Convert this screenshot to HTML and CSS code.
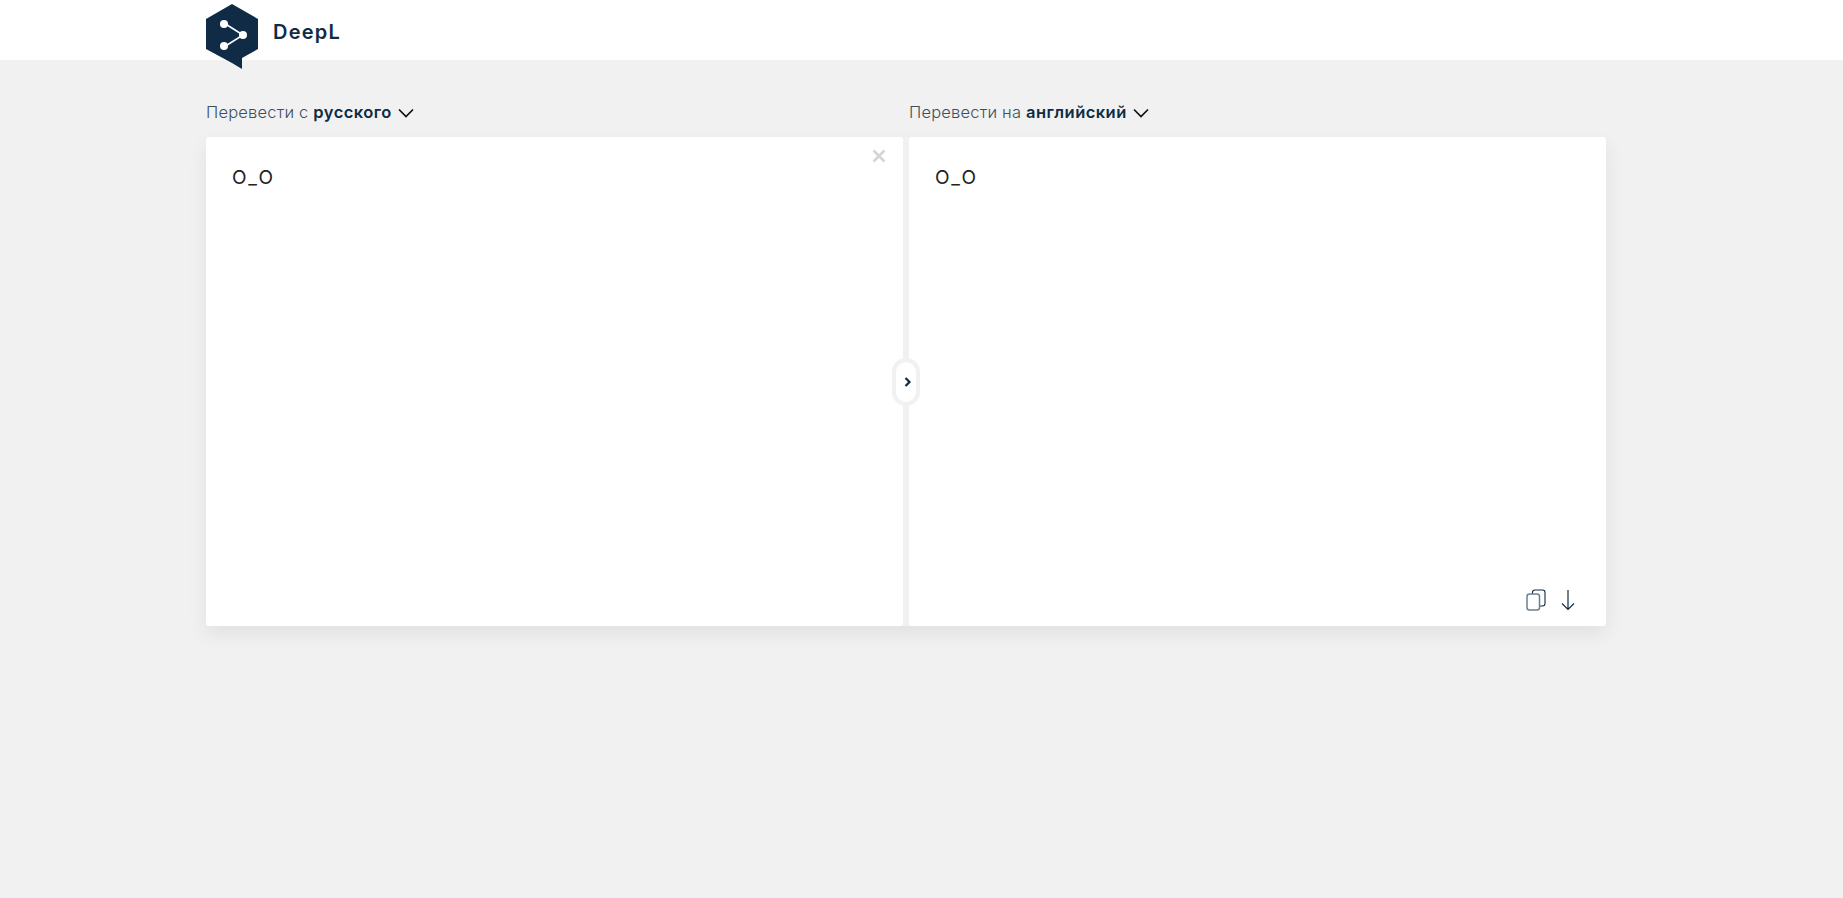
FILE: index.html
```html
<!DOCTYPE html>
<html>
<head>
	<meta charset="utf8">
	<title>DeepL</title>
	<link rel="stylesheet" href="styles.css">
</head>
<body>
	<header class="topbar">
		<div class="topbar-inner">
			<svg class="logo" viewBox="0 0 52 66" width="52" height="66">
				<path d="M26 0 L52 15 L52 45 L36 54 L36 65 L26 59 L0 45 L0 15 Z" fill="#0f2b46"/>
				<path d="M18 19 L37 31 L18 43" fill="none" stroke="#fff" stroke-width="1.6"/>
				<circle cx="18" cy="20" r="4" fill="#fff"/>
				<circle cx="37" cy="31" r="4" fill="#fff"/>
				<circle cx="18" cy="42" r="4" fill="#fff"/>
			</svg>
			<span class="brand">DeepL</span>
		</div>
	</header>

	<main class="translator">
		<div class="labels">
			<div class="lang-label">
				Перевести с <b>русского</b>
				<svg class="chevron" viewBox="0 0 16 10" width="16" height="10"><path d="M1 1.5 L8 8.5 L15 1.5" fill="none" stroke="#111" stroke-width="1.7"/></svg>
			</div>
			<div class="lang-label">
				Перевести на <b>английский</b>
				<svg class="chevron" viewBox="0 0 16 10" width="16" height="10"><path d="M1 1.5 L8 8.5 L15 1.5" fill="none" stroke="#111" stroke-width="1.7"/></svg>
			</div>
		</div>
		<div class="panels">
			<section class="panel">
				<p class="text">O_O</p>
				<svg class="clear" viewBox="0 0 14 14" width="14" height="14"><path d="M1.5 1.5 L12.5 12.5 M12.5 1.5 L1.5 12.5" stroke="#d5d5d5" stroke-width="2.6"/></svg>
			</section>
			<section class="panel">
				<p class="text">O_O</p>
				<div class="actions">
					<svg viewBox="0 0 20 22" width="20" height="22" fill="#fff">
						<rect x="6.5" y="1" width="12.5" height="16" rx="2.5" stroke="#0f2b46" stroke-width="1.1"/>
						<rect x="1" y="5" width="12.5" height="16" rx="2.5" stroke="#6d7f91" stroke-width="1.5"/>
					</svg>
					<svg viewBox="0 0 14 22" width="14" height="22"><path d="M7 1 L7 20.5 M1 14.5 L7 20.5 L13 14.5" fill="none" stroke="#0f2b46" stroke-width="1.2"/></svg>
				</div>
			</section>
			<button class="swap">
				<svg viewBox="0 0 8 10" width="8" height="10"><path d="M1.5 1 L5.5 5 L1.5 9" fill="none" stroke="#0f2b46" stroke-width="2.2"/></svg>
			</button>
		</div>
	</main>
</body>
</html>
```

FILE: styles.css
```css
html, body {
	margin: 0;
	padding: 0;
}
body {
	background: #f1f1f1;
	font-family: Inter, "Noto Sans", sans-serif;
	color: #0f2b46;
	height: 898px;
	overflow: hidden;
}

.topbar {
	background: #fff;
	height: 60px;
}
.topbar-inner {
	display: flex;
	align-items: flex-start;
	margin-left: 206px;
}
.logo {
	margin-top: 4px;
	flex: none;
}
.brand {
	margin: 20px 0 0 15px;
	font-size: 20px;
	line-height: 24px;
	font-weight: 600;
	letter-spacing: 1.2px;
}

.translator {
	width: 1400px;
	margin-left: 206px;
}
.labels {
	display: grid;
	grid-template-columns: 703px 697px;
	padding-top: 42px;
	height: 35px;
}
.lang-label {
	font-size: 16.5px;
	line-height: 20px;
	font-weight: 300;
	letter-spacing: 0.2px;
	color: #3d4f60;
}
.lang-label b {
	font-weight: 600;
	letter-spacing: 0.45px;
	color: #0f2b46;
}
.chevron {
	margin-left: 1px;
}

.panels {
	position: relative;
	display: grid;
	grid-template-columns: 697px 697px;
	column-gap: 6px;
	height: 489px;
	border-radius: 3px;
	box-shadow: 0 8px 20px rgba(0, 0, 0, 0.07);
}
.panel {
	position: relative;
	background: #fff;
	border-radius: 3px;
}
.text {
	margin: 0;
	padding: 29px 26px;
	font-size: 19px;
	line-height: 24px;
	letter-spacing: 2.4px;
	color: #222;
}
.clear {
	position: absolute;
	top: 12px;
	right: 17px;
}
.actions {
	position: absolute;
	right: 31px;
	bottom: 15px;
	display: flex;
	gap: 15px;
	align-items: flex-end;
}
.swap {
	position: absolute;
	left: 686px;
	top: 221px;
	width: 28px;
	height: 48px;
	padding: 0 0 0 3px;
	background: #fff;
	border: 4px solid #f1f1f1;
	border-radius: 14px;
	display: flex;
	align-items: center;
	justify-content: center;
}
```
